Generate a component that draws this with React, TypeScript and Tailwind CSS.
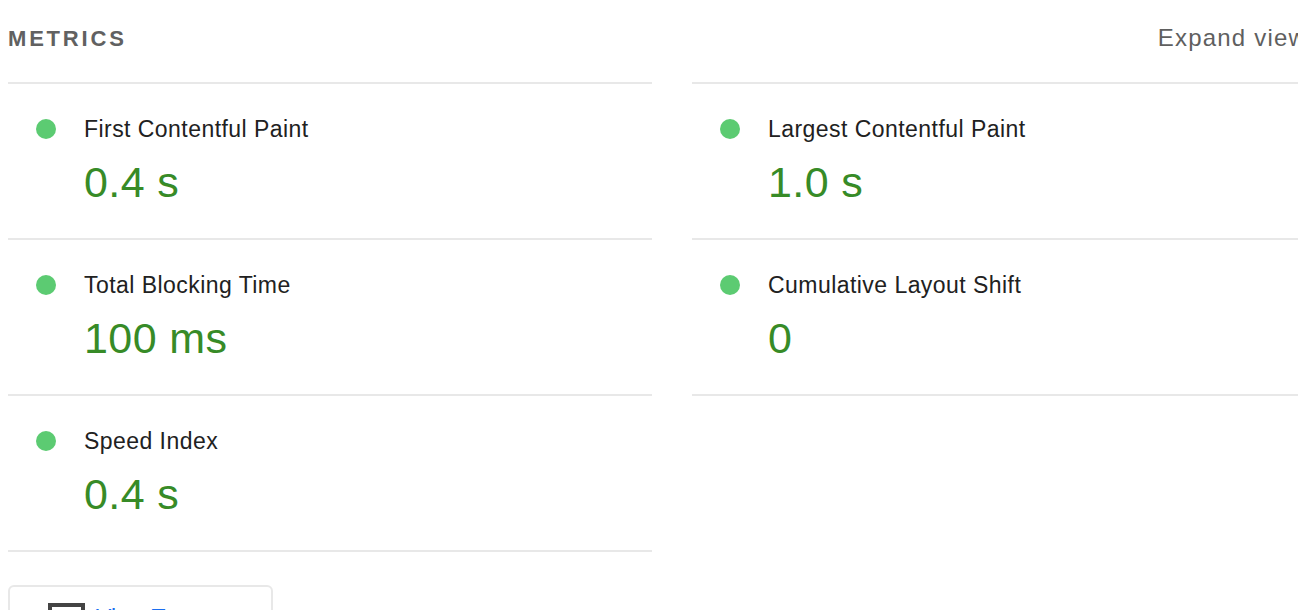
const metrics = [
  [
    { label: 'First Contentful Paint', value: '0.4 s' },
    { label: 'Total Blocking Time', value: '100 ms' },
    { label: 'Speed Index', value: '0.4 s' },
  ],
  [
    { label: 'Largest Contentful Paint', value: '1.0 s' },
    { label: 'Cumulative Layout Shift', value: '0' },
  ],
];

function Metric({ label, value }: { label: string; value: string }) {
  return (
    <div className="h-[156px] border-b-2 border-[#e8e8e8] pl-7 pt-[31px]">
      <div className="flex items-center gap-7 h-[28px]">
        <span className="w-5 h-5 rounded-full bg-[#5ccb72] shrink-0" />
        <span className="text-[23px] leading-[28px] tracking-[0.45px] text-[#212121]">{label}</span>
      </div>
      <div className="pl-12 mt-[14px] text-[43px] leading-[50px] tracking-[0.4px] text-[#378b27]">{value}</div>
    </div>
  );
}

export default function App() {
  return (
    <div
      className="w-[1298px] h-[610px] overflow-hidden bg-white"
      style={{ fontFamily: '"Liberation Sans", Arial, sans-serif' }}
    >
      <div className="w-[1336px] pl-2">
        {/* Header */}
        <div className="h-[82px] pb-[6px] pr-[29px] flex items-center justify-between">
          <h2 className="text-[22px] font-bold tracking-[2.8px] text-[#616161]">METRICS</h2>
          <span className="text-[24px] tracking-[1.2px] text-[#5f5f5f]">Expand view</span>
        </div>

        {/* Metrics grid */}
        <div className="grid grid-cols-2 gap-x-10 w-[1328px]">
          {metrics.map((col, i) => (
            <div key={i} className="flex flex-col border-t-2 border-[#e8e8e8]">
              {col.map((m) => (
                <Metric key={m.label} {...m} />
              ))}
            </div>
          ))}
        </div>

        {/* Treemap button */}
        <div className="mt-[33px] w-[265px] h-[80px] border-2 border-[#e8e8e8] rounded-md flex items-start gap-[11px] pl-[38px] pt-4">
          <span className="w-[37px] h-[30px] border-4 border-[#444444] shrink-0" />
          <span className="text-[23px] leading-[28px] text-[#1a6ef0] mt-[1px]">View Treemap</span>
        </div>
      </div>
    </div>
  );
}
